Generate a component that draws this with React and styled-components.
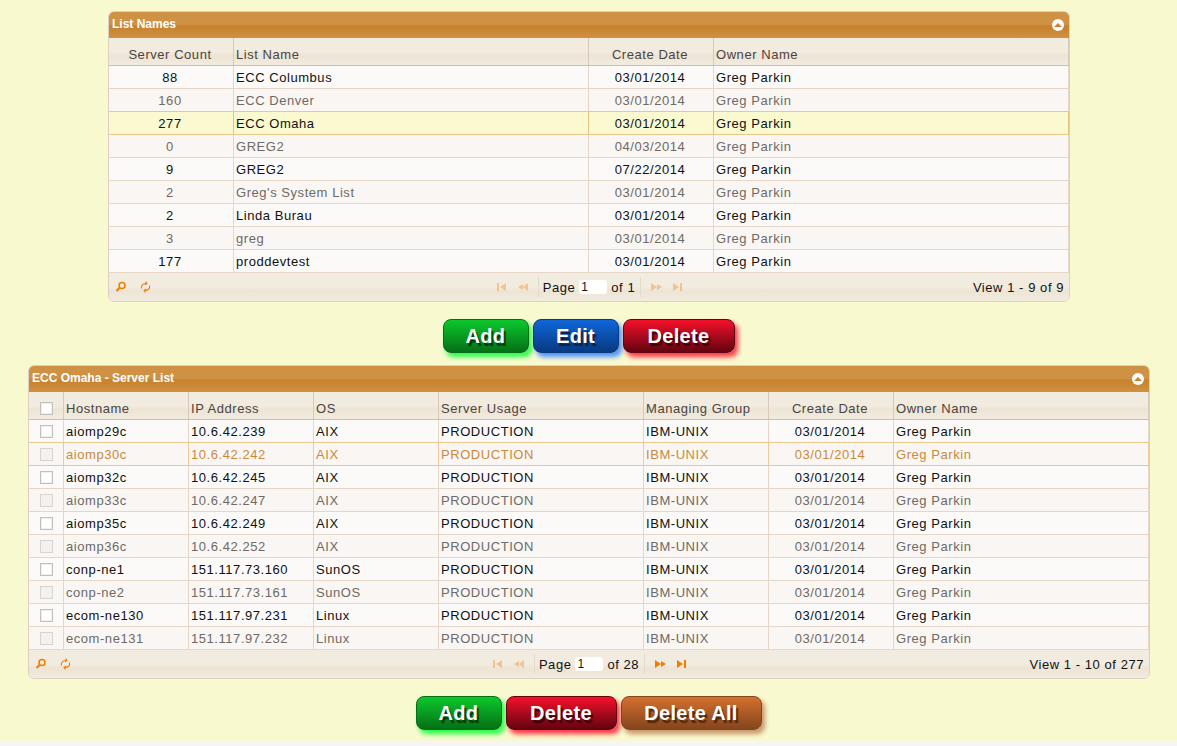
import React from "react";
import styled, { createGlobalStyle } from "styled-components";

const GlobalStyle = createGlobalStyle`
  html, body { margin: 0; padding: 0; background: #f5f5f5; }
  body { font-family: "Liberation Sans", Arial, sans-serif; }
`;

const Page = styled.div`
  height: 741px;
  overflow: hidden;
  background: #f9f9d0;
  padding-top: 11px;
  box-sizing: border-box;
`;

const Panel = styled.div`
  width: ${(p) => p.width}px;
  margin-left: ${(p) => p.left}px;
  border: 1px solid #dfcfc0;
  border-radius: 6px;
  overflow: hidden;
  background: #fbf9f7;
  box-sizing: border-box;
`;

const TitleBar = styled.div`
  height: 26px;
  display: flex;
  align-items: center;
  justify-content: space-between;
  padding: 0 5px 2px 3px;
  box-sizing: border-box;
  background: linear-gradient(#cf9143 50%, #c98430 50%, #c98430 65%, #cf9143 100%);
  color: #fff;
  font-size: 12px;
  font-weight: bold;
`;

const Toggle = styled.span`
  width: 12px;
  height: 12px;
  margin-top: 2px;
  border-radius: 50%;
  background: #fff;
  display: flex;
  align-items: center;
  justify-content: center;
  &::before {
    content: "";
    border-left: 4px solid transparent;
    border-right: 4px solid transparent;
    border-bottom: 4px solid #c98430;
    margin-top: -1px;
  }
`;

const Row = styled.div`
  display: grid;
  grid-template-columns: ${(p) => p.columns};
  height: 23px;
  box-sizing: border-box;
  border-bottom: 1px solid ${(p) => (p.selected || p.hover ? "#e8c88c" : "#e6d6c8")};
  box-shadow: ${(p) => (p.selected || p.hover ? "0 -1px 0 #e8c88c" : "none")};
  background: ${(p) => (p.selected ? "#fbf9d0" : p.alt ? "#f9f6f3" : "#fbfaf8")};
  color: ${(p) => (p.hover ? "#c98a3e" : p.alt ? "#6e6a66" : "#111")};
  font-size: 13px;
  letter-spacing: 0.55px;
  line-height: 24px;
`;

const HeadRow = styled(Row)`
  height: 28px;
  line-height: 34px;
  color: #4a4440;
  border-bottom-color: #cbbdb0;
  background: linear-gradient(#f2ebe0 50%, #ede4d4 65%, #f2ebe0 100%);
`;

const Cell = styled.div`
  border-right: 1px solid ${(p) => (p.selected ? "#e3c27e" : p.hover ? "#f0c89a" : "#e6d6c8")};
  padding: ${(p) => (p.center ? "0 3px 0 1px" : "0 2px")};
  text-align: ${(p) => (p.center ? "center" : "left")};
  white-space: nowrap;
  overflow: hidden;
  display: ${(p) => (p.check ? "flex" : "block")};
  align-items: center;
  justify-content: center;
`;

const HeadCell = styled(Cell)`
  border-right-color: #d6c8bb;
  padding-top: ${(p) => (p.check ? "6px" : "0")};
`;

const CheckBox = styled.span`
  width: 11px;
  height: 11px;
  border: 1px solid ${(p) => (p.dim ? "#d8d4cf" : "#c4bfba")};
  background: ${(p) => (p.dim ? "#f4f2ee" : "#fff")};
  box-shadow: inset 0 0 0 1px #f2f0ec;
`;

const Pager = styled.div`
  height: 28px;
  display: grid;
  grid-template-columns: 1fr auto 1fr;
  align-items: center;
  padding: 0 5px 0 6px;
  background: linear-gradient(#f2ebe0 50%, #ede4d4 65%, #f2ebe0 100%);
  font-size: 13px;
  letter-spacing: 0.55px;
  color: #111;
`;

const PagerIcons = styled.div`
  display: flex;
  gap: 13px;
  align-items: center;
`;

const PagerCenter = styled.div`
  display: flex;
  align-items: center;
`;

const NavGroup = styled.div`
  display: flex;
  gap: 11px;
  padding: 0 10px;
  align-items: center;
  opacity: ${(p) => (p.off ? 0.35 : 1)};
`;

const Divider = styled.span`
  width: 1px;
  height: 20px;
  background: #e2dacd;
`;

const PageLabel = styled.div`
  display: flex;
  align-items: center;
  gap: 4px;
  padding: 0 5px 0 4px;
`;

const PageInput = styled.span`
  width: 28px;
  height: 14px;
  line-height: 15px;
  font-size: 12px;
  background: #fff;
  border-radius: 3px;
  padding-left: 2px;
  box-sizing: border-box;
`;

const ViewText = styled.div`
  text-align: right;
`;

const ButtonRow = styled.div`
  display: flex;
  justify-content: center;
  gap: 4px;
  height: ${(p) => p.height}px;
  padding: 17px 0 0 1px;
  width: 1176px;
  box-sizing: border-box;
`;

const palette = {
  green: ["#0cc82c", "#056f16", "#22ff44", "#023a0a"],
  blue: ["#0f66d8", "#083a80", "#4a90ff", "#06234f"],
  red: ["#f5102a", "#620410", "#ff3344", "#3c020a"],
  brown: ["#d4702f", "#84451c", "#c89468", "#4c2810"],
};

const Button = styled.div`
  width: ${(p) => p.width}px;
  height: 34px;
  box-sizing: border-box;
  border-radius: 8px;
  border: 1px solid ${(p) => palette[p.color][1]};
  background: linear-gradient(${(p) => palette[p.color][0]}, ${(p) => palette[p.color][1]});
  box-shadow: 3px 4px 5px ${(p) => palette[p.color][2]};
  color: #fff;
  font-size: 20px;
  font-weight: bold;
  letter-spacing: 0.3px;
  text-align: center;
  line-height: 33px;
  text-shadow: 2px 3px 1px ${(p) => palette[p.color][3]};
`;

// Pager icons
const Magnifier = () => (
  <svg width="12" height="12" viewBox="0 0 12 12" fill="none" stroke="#f07d00">
    <circle cx="7" cy="4.5" r="3" strokeWidth="1.5" />
    <path d="M4.5 7 L1.5 10" strokeWidth="2.2" />
  </svg>
);

const Refresh = () => (
  <svg width="12" height="12" viewBox="0 0 12 12" fill="none" stroke="#f07d00" strokeWidth="1.1">
    <path d="M1.5 7.5 A4 4 0 0 1 6 2.5 M9.5 4.5 A4 4 0 0 1 5 9.5" />
    <path d="M5.5 0.5 L7 2.5 L5 4 M5.5 11.5 L4 9.5 L6 8" />
  </svg>
);

const First = () => (
  <svg width="9" height="8" viewBox="0 0 9 8" fill="#f07d00">
    <path d="M0 0h2v8H0z M9 0v8L3 4z" />
  </svg>
);

const Prev = () => (
  <svg width="11" height="8" viewBox="0 0 11 8" fill="#f07d00">
    <path d="M6 1v6L1 4z M11 0v8L6 4z" />
  </svg>
);

const Next = () => (
  <svg width="11" height="8" viewBox="0 0 11 8" fill="#f07d00">
    <path d="M0 0v8l6-4z M6 1v6l5-3z" />
  </svg>
);

const Last = () => (
  <svg width="9" height="8" viewBox="0 0 9 8" fill="#f07d00">
    <path d="M0 0v8l6-4z M7 0h2v8H7z" />
  </svg>
);

const listCols = "125px 355px 125px 1fr";
const listRows = [
  ["88", "ECC Columbus", "03/01/2014"],
  ["160", "ECC Denver", "03/01/2014"],
  ["277", "ECC Omaha", "03/01/2014"],
  ["0", "GREG2", "04/03/2014"],
  ["9", "GREG2", "07/22/2014"],
  ["2", "Greg's System List", "03/01/2014"],
  ["2", "Linda Burau", "03/01/2014"],
  ["3", "greg", "03/01/2014"],
  ["177", "proddevtest", "03/01/2014"],
];

const serverCols = "35px 125px 125px 125px 205px 125px 125px 1fr";
const servers = [
  ["aiomp29c", "10.6.42.239", "AIX"],
  ["aiomp30c", "10.6.42.242", "AIX"],
  ["aiomp32c", "10.6.42.245", "AIX"],
  ["aiomp33c", "10.6.42.247", "AIX"],
  ["aiomp35c", "10.6.42.249", "AIX"],
  ["aiomp36c", "10.6.42.252", "AIX"],
  ["conp-ne1", "151.117.73.160", "SunOS"],
  ["conp-ne2", "151.117.73.161", "SunOS"],
  ["ecom-ne130", "151.117.97.231", "Linux"],
  ["ecom-ne131", "151.117.97.232", "Linux"],
];

const App = () => {
  return (
    <Page>
      <GlobalStyle />
      <Panel width={962} left={108}>
        <TitleBar>
          <span>List Names</span>
          <Toggle />
        </TitleBar>
        <HeadRow columns={listCols}>
          <HeadCell center>Server Count</HeadCell>
          <HeadCell>List Name</HeadCell>
          <HeadCell center>Create Date</HeadCell>
          <HeadCell>Owner Name</HeadCell>
        </HeadRow>
        {listRows.map((r, i) => {
          const selected = i === 2;
          return (
            <Row key={i} columns={listCols} alt={i % 2 === 1} selected={selected}>
              <Cell center selected={selected}>{r[0]}</Cell>
              <Cell selected={selected}>{r[1]}</Cell>
              <Cell center selected={selected}>{r[2]}</Cell>
              <Cell selected={selected}>Greg Parkin</Cell>
            </Row>
          );
        })}
        <Pager>
          <PagerIcons>
            <Magnifier />
            <Refresh />
          </PagerIcons>
          <PagerCenter>
            <NavGroup off>
              <First />
              <Prev />
            </NavGroup>
            <Divider />
            <PageLabel>
              Page <PageInput>1</PageInput> of 1
            </PageLabel>
            <Divider />
            <NavGroup off>
              <Next />
              <Last />
            </NavGroup>
          </PagerCenter>
          <ViewText>View 1 - 9 of 9</ViewText>
        </Pager>
      </Panel>

      <ButtonRow height={63}>
        <Button color="green" width={86}>Add</Button>
        <Button color="blue" width={86}>Edit</Button>
        <Button color="red" width={112}>Delete</Button>
      </ButtonRow>

      <Panel width={1122} left={28}>
        <TitleBar>
          <span>ECC Omaha - Server List</span>
          <Toggle />
        </TitleBar>
        <HeadRow columns={serverCols}>
          <HeadCell check><CheckBox /></HeadCell>
          <HeadCell>Hostname</HeadCell>
          <HeadCell>IP Address</HeadCell>
          <HeadCell>OS</HeadCell>
          <HeadCell>Server Usage</HeadCell>
          <HeadCell>Managing Group</HeadCell>
          <HeadCell center>Create Date</HeadCell>
          <HeadCell>Owner Name</HeadCell>
        </HeadRow>
        {servers.map((s, i) => {
          const hover = i === 1;
          const alt = i % 2 === 1;
          return (
            <Row key={i} columns={serverCols} alt={alt} hover={hover}>
              <Cell check hover={hover}><CheckBox dim={alt} /></Cell>
              <Cell hover={hover}>{s[0]}</Cell>
              <Cell hover={hover}>{s[1]}</Cell>
              <Cell hover={hover}>{s[2]}</Cell>
              <Cell hover={hover}>PRODUCTION</Cell>
              <Cell hover={hover}>IBM-UNIX</Cell>
              <Cell center hover={hover}>03/01/2014</Cell>
              <Cell hover={hover}>Greg Parkin</Cell>
            </Row>
          );
        })}
        <Pager>
          <PagerIcons>
            <Magnifier />
            <Refresh />
          </PagerIcons>
          <PagerCenter>
            <NavGroup off>
              <First />
              <Prev />
            </NavGroup>
            <Divider />
            <PageLabel>
              Page <PageInput>1</PageInput> of 28
            </PageLabel>
            <Divider />
            <NavGroup>
              <Next />
              <Last />
            </NavGroup>
          </PagerCenter>
          <ViewText>View 1 - 10 of 277</ViewText>
        </Pager>
      </Panel>

      <ButtonRow height={60}>
        <Button color="green" width={86}>Add</Button>
        <Button color="red" width={111}>Delete</Button>
        <Button color="brown" width={141}>Delete All</Button>
      </ButtonRow>
    </Page>
  );
};

export default App;
